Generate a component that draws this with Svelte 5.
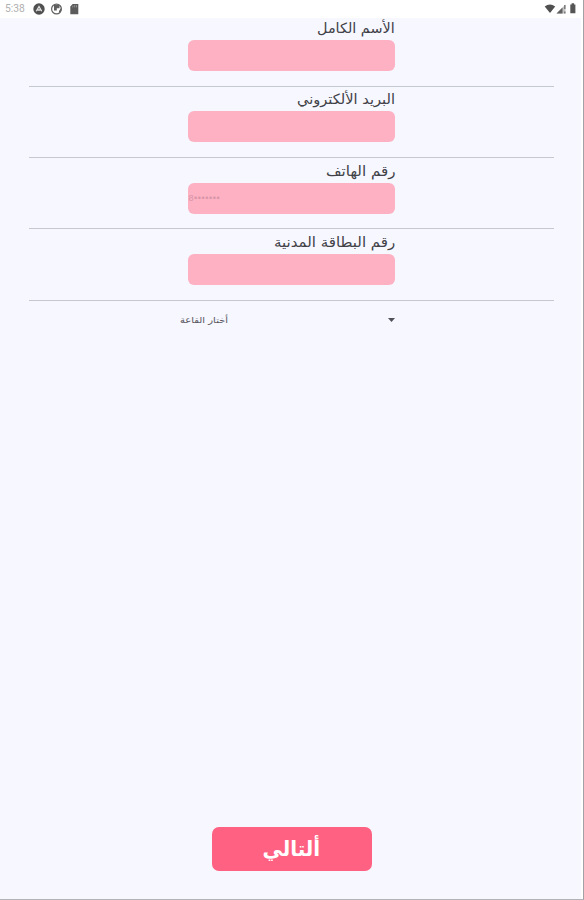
<script>
  const fields = [
    { label: 'الأسم الكامل', width: 78, placeholder: '' },
    { label: 'البريد الألكتروني', width: 98, placeholder: '' },
    { label: 'رقم الهاتف', width: 69, placeholder: '8•••••••' },
    { label: 'رقم البطاقة المدنية', width: 121, placeholder: '' },
  ];

  function fit(node, width) {
    node.style.transform = `scaleX(${width / node.offsetWidth})`;
  }
</script>

<div class="screen">
  <header>
    <span class="time">5:38</span>
    <svg class="notices" width="48" height="14" viewBox="0 0 48 14">
      <circle cx="7" cy="7" r="5.7" fill="#505050" />
      <path d="M4.3 9.3 7 4.5l2.7 4.8M5.7 8h2.6" fill="none" stroke="#e4e4e4" stroke-width="1.3" />
      <circle cx="24.5" cy="7" r="4.9" fill="#fff" stroke="#606060" stroke-width="1.2" />
      <path d="M22 3h5.5v3.2h-2.7v2.3H22z" fill="#606060" />
      <path d="M27 9l2-3v3l-2 2z" fill="#606060" />
      <path d="M40.6 2h5.7v10.3h-8V4.5z" fill="#5c5c5c" />
      <path d="M40.8 3.7v1.7M42.7 3.2v2.2M44.5 3.2v2.2" stroke="#aaa" stroke-width=".7" />
    </svg>
    <svg class="signals" width="36" height="14" viewBox="0 0 36 14">
      <path d="M.7 4.6Q6 .6 11.2 4.6L6 11z" fill="#505050" />
      <path d="M21.5 2.4v9h-9z" fill="#c4c4c4" />
      <path d="M18.5 5.4v6h-6z" fill="#606060" />
      <path d="M20.8 3v4M20.8 9.4v2" stroke="#707070" stroke-width="1.3" />
      <path d="M26.3 2.4h1.3V1.2h2.5v1.2h1.3v8.9h-5.1z" fill="#555" />
    </svg>
  </header>

  <main>
    {#each fields as field}
      <section>
        <div class="column">
          <label><span use:fit={field.width}>{field.label}</span></label>
          <div class="input">{field.placeholder}</div>
        </div>
      </section>
    {/each}
    <div class="picker">
      <span class="choice"><span use:fit={48}>أختار القاعة</span></span>
      <svg width="7" height="4" viewBox="0 0 7 4"><path d="M0 0h7L3.5 4z" fill="#505057" /></svg>
    </div>
  </main>

  <button><span use:fit={58}>ألتالي</span></button>
</div>

<style>
  .screen {
    box-sizing: border-box;
    width: 584px;
    height: 900px;
    display: flex;
    flex-direction: column;
    align-items: center;
    overflow: hidden;
    background: #f6f7ff;
    border-right: 1px solid #a2a2a6;
    border-bottom: 1px solid #b2b2b8;
    font-family: "DejaVu Sans", sans-serif;
    box-shadow: inset -2px 0 #fff;
  }
  header {
    box-sizing: border-box;
    flex: none;
    width: 100%;
    height: 18px;
    padding: 2px 3px 0 5px;
    display: flex;
    align-items: flex-start;
    background: #fff;
  }
  .time {
    width: 27px;
    font: 10.3px/14px Roboto, sans-serif;
    color: #b0b0b0;
  }
  .signals { margin-left: auto; }
  main { width: 525px; }
  section {
    box-sizing: border-box;
    height: 71.4px;
    padding-top: 2.5px;
    border-bottom: 1px solid #c6c8cf;
  }
  section:first-child { height: 68.7px; padding-top: 0; }
  .column { width: 207.5px; margin-left: 158.5px; }
  label {
    display: flex;
    justify-content: flex-start;
    direction: rtl;
    height: 22px;
    font-size: 14px;
    line-height: 20px;
    color: #414147;
    white-space: nowrap;
  }
  label span { flex: none; transform-origin: right; }
  .input {
    box-sizing: border-box;
    height: 31px;
    padding-left: 1px;
    border-radius: 6px;
    background: #fdb1c3;
    color: #d795a7;
    font: 9px/30px "Liberation Sans", sans-serif;
    letter-spacing: .6px;
  }
  .picker {
    box-sizing: border-box;
    width: 214px;
    height: 39px;
    margin-left: 151.5px;
    display: flex;
    justify-content: space-between;
    align-items: center;
  }
  .choice {
    direction: rtl;
    width: 48px;
    display: flex;
    font-size: 8.5px;
    color: #55555c;
    white-space: nowrap;
  }
  .choice span { flex: none; transform-origin: right; }
  button {
    flex: none;
    width: 160px;
    height: 44px;
    margin: auto 0 28.5px;
    padding: 0;
    border: 0;
    border-radius: 7px;
    background: #ff6183;
    color: #fff;
    font: bold 21px/44px "DejaVu Sans", sans-serif;
    direction: rtl;
  }
  button span { display: inline-block; }
</style>
